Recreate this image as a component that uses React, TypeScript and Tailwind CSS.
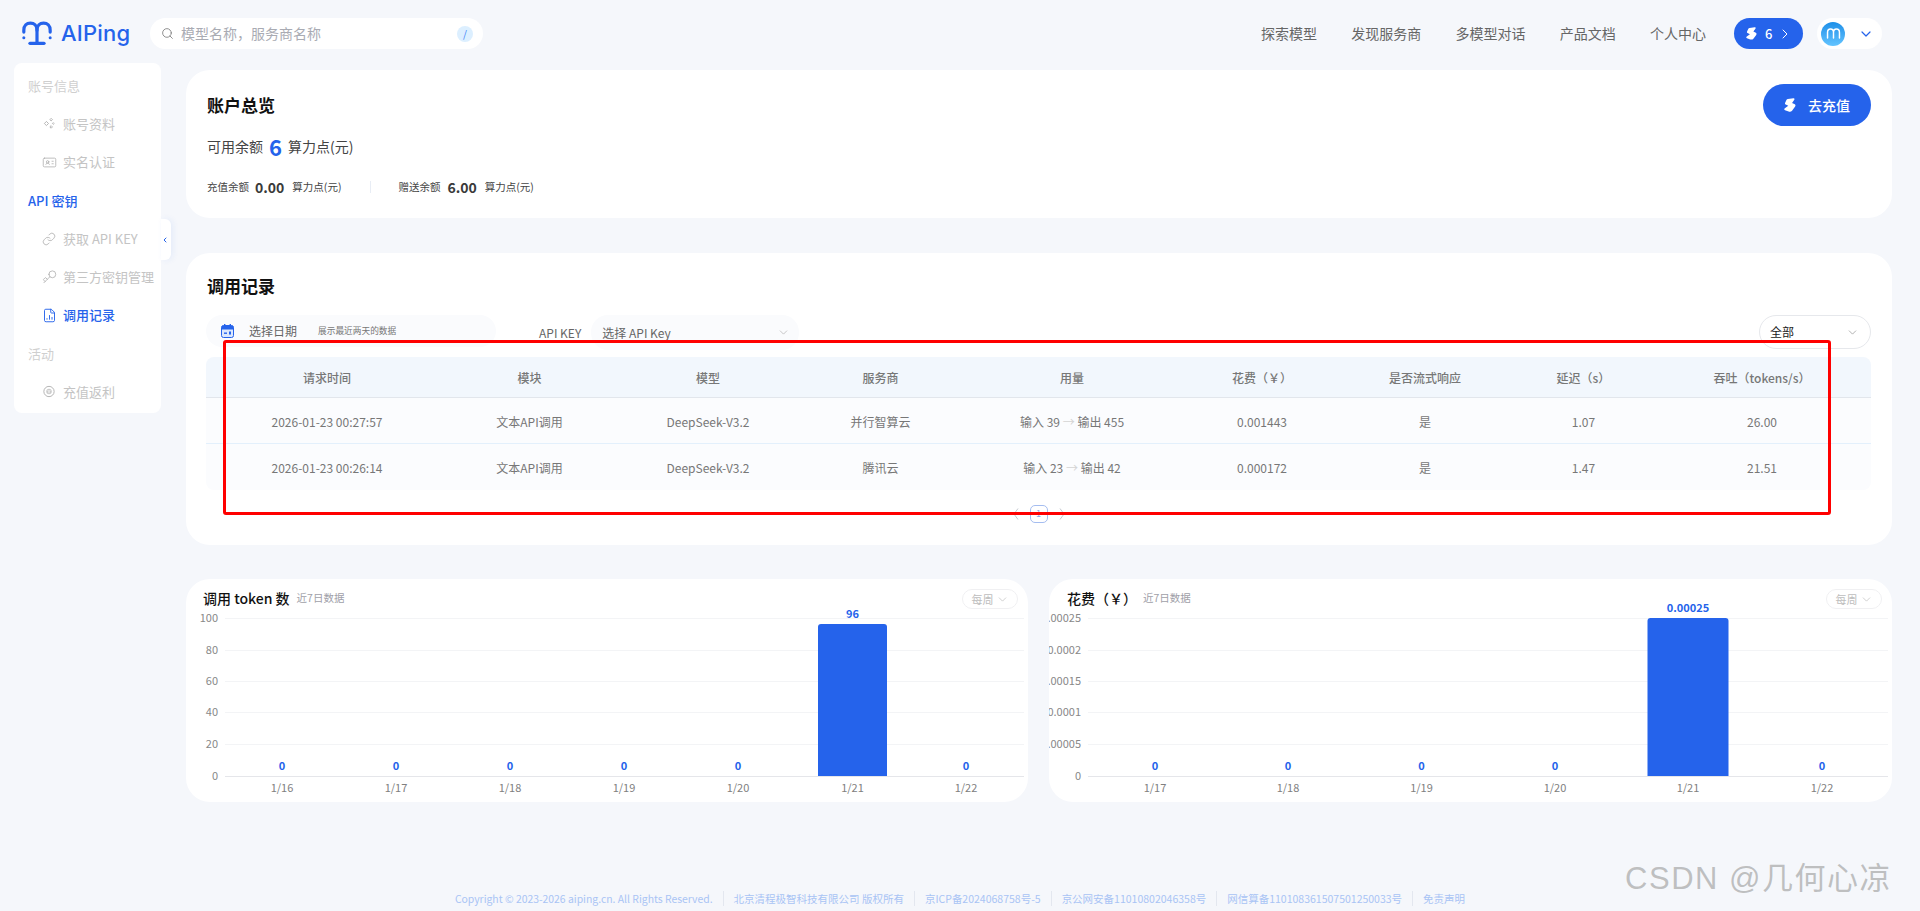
import React from "react";
import { Search, ChevronRight, ChevronDown, ChevronLeft, IdCard, Link, Key, FileChartColumn } from "lucide-react";

const BoltS = ({ className }: { className?: string }) => (
  <svg viewBox="0 0 14 16" className={className} fill="currentColor">
    <path d="M4.5 1 L11 0.2 C12.2 0 12.6 1 12 2 L9.4 5.6 L12.6 7.2 C13.6 7.8 13.6 8.8 13 9.8 L9.4 14.6 C8.4 15.9 6.6 16 5.4 15.5 L1.2 14 C0 13.5 0 12.5 1 11.8 L5 8.8 L2 7.4 C1 6.9 1 6 1.5 5 L3 2 C3.4 1.3 3.8 1.1 4.5 1 Z" />
  </svg>
);

const Logo = () => (
  <svg viewBox="0 0 34 26" className="w-[32px] h-[26px]" fill="none" stroke="#2563eb" strokeWidth="3.4" strokeLinecap="round">
    <path d="M3 12 V10 C3 5 6 2.5 10 2.5 C14 2.5 17 5 17 10 V23" />
    <path d="M31 12 V10 C31 5 28 2.5 24 2.5 C20 2.5 17 5 17 10" />
    <path d="M9.5 24 H24.5" />
    <circle cx="3" cy="18" r="1.6" fill="#2563eb" stroke="none" />
    <circle cx="31" cy="18" r="1.6" fill="#2563eb" stroke="none" />
  </svg>
);

const Diamonds = () => (
  <svg viewBox="0 0 14 14" className="w-[13px] h-[13px]" fill="none" stroke="#aaaaaa" strokeWidth="1">
    <path d="M4 4.6 L6.4 7 L4 9.4 L1.6 7 Z" />
    <path d="M9.5 1 L11 2.5 L9.5 4 L8 2.5 Z" />
    <path d="M9.5 9.5 L11 11 L9.5 12.5 L8 11 Z" />
    <path d="M12 6 L13 7 L12 8 L11 7 Z" />
  </svg>
);

const YenCircle = () => (
  <svg viewBox="0 0 14 14" className="w-[13px] h-[13px]" fill="none" stroke="#aaaaaa" strokeWidth="1">
    <circle cx="7" cy="7" r="6" />
    <circle cx="7" cy="7" r="3.2" fill="#cccccc" stroke="none" />
    <path d="M5.6 5.4 L7 7 L8.4 5.4 M7 7 V9" stroke="#ffffff" />
  </svg>
);

const CalendarMark = () => (
  <svg viewBox="0 0 13 14" className="w-[13px] h-[14px]">
    <rect x="0.5" y="1.5" width="12" height="12" rx="2" fill="#dbe8fd" stroke="#2563eb" />
    <path d="M0.5 3.5 a2 2 0 0 1 2 -2 h8 a2 2 0 0 1 2 2 V5.5 H0.5 Z" fill="#2563eb" />
    <rect x="3" y="0" width="1.4" height="3" fill="#2563eb" />
    <rect x="8.6" y="0" width="1.4" height="3" fill="#2563eb" />
    <rect x="3" y="8.5" width="3" height="1.4" fill="#2563eb" />
    <rect x="8" y="7.5" width="2" height="3" fill="#2563eb" />
  </svg>
);

const PageArrow = ({ flip }: { flip?: boolean }) => (
  <svg viewBox="0 0 6 12" className={`w-[6px] h-[12px] ${flip ? "-scale-x-100" : ""}`} fill="none" stroke="#c4c8d0" strokeWidth="1">
    <path d="M5 0.5 L1 6 L5 11.5" />
  </svg>
);

const SideLabel = ({ children, active }: { children: React.ReactNode; active?: boolean }) => (
  <div className={`h-[38.25px] pl-[14px] flex items-center text-[13px] ${active ? "text-[#2563eb] font-medium" : "text-[#cfcfcf]"}`}>{children}</div>
);

const SideItem = ({ icon, label, active }: { icon: React.ReactNode; label: string; active?: boolean }) => (
  <div className={`h-[38.25px] pl-[29px] flex items-center gap-[8px] text-[13px] ${active ? "text-[#2563eb] font-medium" : "text-[#c4c4c4]"}`}>
    <span className="w-[12px] h-[14px] flex items-center justify-center">{icon}</span>
    <span>{label}</span>
  </div>
);

const Sidebar = () => (
  <aside className="relative w-[147px] h-[350px] ml-[14px] pt-[3.5px] bg-white rounded-[8px] shrink-0">
    <SideLabel>账号信息</SideLabel>
    <SideItem icon={<Diamonds />} label="账号资料" />
    <SideItem icon={<IdCard className="w-[15px] h-[15px] shrink-0 text-[#aaaaaa]" strokeWidth={1.2} />} label="实名认证" />
    <SideLabel active>API 密钥</SideLabel>
    <SideItem icon={<Link className="w-[14px] h-[14px] shrink-0 text-[#aaaaaa]" strokeWidth={1.3} />} label="获取 API KEY" />
    <SideItem icon={<Key className="w-[15px] h-[15px] shrink-0 text-[#aaaaaa] rotate-180" strokeWidth={1.2} />} label="第三方密钥管理" />
    <SideItem icon={<FileChartColumn className="w-[15px] h-[15px] shrink-0 text-[#2563eb]" strokeWidth={1.5} />} label="调用记录" active />
    <SideLabel>活动</SideLabel>
    <SideItem icon={<YenCircle />} label="充值返利" />
    <div className="absolute left-[147px] top-[156px] w-[10px] h-[41px] bg-white rounded-r-[6px] shadow-[2px_0_6px_rgba(37,99,235,0.08)] flex items-center justify-start">
      <ChevronLeft className="w-[8px] h-[10px] text-[#2563eb]" strokeWidth={3} />
    </div>
  </aside>
);

const Header = () => (
  <header className="h-[63px] flex items-start shrink-0">
    <div className="ml-[21px] mt-[20px] w-[129px] flex items-center gap-[8px]">
      <Logo />
      <span className="font-['Inter',sans-serif] text-[22px] leading-[26px] font-medium tracking-[0.2px] text-[#2563eb]">AIPing</span>
    </div>
    <div className="mt-[18px] w-[333px] h-[31px] bg-white rounded-full flex items-center pl-[11px] pr-[10px]">
      <Search className="w-[13px] h-[13px] text-[#777777]" strokeWidth={1.5} />
      <span className="ml-[7px] text-[14px] text-[#a9abb3] flex-1">模型名称，服务商名称</span>
      <span className="w-[16px] h-[16px] rounded-full bg-[#dcefff] text-[#3b82f6] text-[10px] flex items-center justify-center">/</span>
    </div>
    <nav className="ml-auto mt-[18px] mr-[38px] flex items-center h-[31px]">
      <div className="flex items-center gap-[34.25px] text-[14px] text-[#666666]">
        <span>探索模型</span>
        <span>发现服务商</span>
        <span>多模型对话</span>
        <span>产品文档</span>
        <span>个人中心</span>
      </div>
      <div className="ml-[28px] w-[69px] h-[31px] rounded-full bg-[#2563eb] text-white flex items-center pl-[12px]">
        <BoltS className="w-[11px] h-[13px]" />
        <span className="ml-[8px] text-[13px] font-medium">6</span>
        <ChevronRight className="ml-[5px] w-[16px] h-[16px]" strokeWidth={1.5} />
      </div>
      <div className="ml-[14px] w-[65px] h-[31px] rounded-full bg-white flex items-center pl-[4px]">
        <div className="w-[24px] h-[24px] rounded-full bg-gradient-to-b from-[#1a8fe8] to-[#62c4ff] flex items-center justify-center">
          <svg viewBox="0 0 16 12" className="w-[15px] h-[11px]" fill="none" stroke="#ffffff" strokeWidth="1.6" strokeLinecap="round">
            <path d="M1.5 11 V5 C1.5 2.5 3 1.2 4.8 1.2 C6.6 1.2 8 2.5 8 5 V11 M8 5 C8 2.5 9.4 1.2 11.2 1.2 C13 1.2 14.5 2.5 14.5 5 V11" />
          </svg>
        </div>
        <ChevronDown className="ml-[13px] w-[16px] h-[16px] text-[#2563eb]" strokeWidth={1.8} />
      </div>
    </nav>
  </header>
);

const Overview = () => (
  <section className="relative h-[148px] bg-white rounded-[24px] pl-[21px] pt-[24px]">
    <h2 className="text-[17px] leading-[22px] font-semibold text-[#111111]">账户总览</h2>
    <div className="mt-[16px] h-[28px] flex items-center text-[14px] text-[#444444]">
      <span>可用余额</span>
      <span className="ml-[6px] text-[22px] leading-[28px] font-semibold text-[#2563eb]">6</span>
      <span className="ml-[6px]">算力点(元)</span>
    </div>
    <div className="mt-[16px] h-[22px] flex items-center text-[10.5px] text-[#444444]">
      <span>充值余额</span>
      <span className="ml-[6px] text-[14px] font-semibold text-[#3a3a3a]">0.00</span>
      <span className="ml-[8px]">算力点(元)</span>
      <span className="ml-[29px] mr-[27px] w-px h-[12px] bg-[#e8edf5]" />
      <span>赠送余额</span>
      <span className="ml-[7px] text-[14px] font-semibold text-[#3a3a3a]">6.00</span>
      <span className="ml-[8px]">算力点(元)</span>
    </div>
    <button className="absolute right-[21px] top-[14px] w-[108px] h-[42px] rounded-full bg-[#2563eb] text-white flex items-center justify-center gap-[12px] text-[14px] font-medium">
      <BoltS className="w-[12px] h-[14px]" />
      <span>去充值</span>
    </button>
  </section>
);

const cols = "grid grid-cols-[242px_163px_194px_151px_232px_142px_190px_127px_224px]";
const head = ["请求时间", "模块", "模型", "服务商", "用量", "花费（￥）", "是否流式响应", "延迟（s）", "吞吐（tokens/s）"];
const rows = [
  ["2026-01-23 00:27:57", "文本API调用", "DeepSeek-V3.2", "并行智算云", ["输入 39", "输出 455"], "0.001443", "是", "1.07", "26.00"],
  ["2026-01-23 00:26:14", "文本API调用", "DeepSeek-V3.2", "腾讯云", ["输入 23", "输出 42"], "0.000172", "是", "1.47", "21.51"],
];
const cellShift = (j: number) => (j === 5 || j === 8 ? "pl-[6px]" : "");

const Records = () => (
  <section className="mt-[35px] h-[292px] bg-white rounded-[24px] pl-[20px] pr-[21px] pt-[21px]">
    <h2 className="text-[17px] leading-[24px] font-semibold text-[#111111] pl-px">调用记录</h2>
    <div className="mt-[17px] h-[42px] flex items-start text-[12px] text-[#666666]">
      <div className="w-[290px] h-[32px] rounded-[16px] bg-[#fafbfd] flex items-center pl-[15px]">
        <CalendarMark />
        <span className="ml-[15px]">选择日期</span>
        <span className="ml-[21px] text-[8.7px] text-[#777777]">展示最近两天的数据</span>
      </div>
      <span className="ml-[43px] h-[35px] leading-[36px]">API KEY</span>
      <div className="ml-[10px] w-[208px] h-[35px] rounded-[17px] bg-[#fafbfd] flex items-center pl-[11px] pr-[9px] justify-between">
        <span>选择 API Key</span>
        <ChevronDown className="w-[13px] h-[13px] text-[#aaaaaa]" strokeWidth={1.2} />
      </div>
      <div className="ml-auto w-[112px] h-[34px] rounded-[17px] border border-[#e6e8ec] flex items-center pl-[10px] pr-[11px] justify-between text-[#222222]">
        <span>全部</span>
        <ChevronDown className="w-[13px] h-[13px] text-[#888888]" strokeWidth={1.2} />
      </div>
    </div>
    <div className={`${cols} h-[41px] items-center text-center text-[12px] font-medium text-[#777777] bg-[#f2f7fd] border-b border-[#e2e6ec] rounded-t-[8px]`}>
      {head.map((h, j) => (
        <span key={h} className={`pt-[2px] ${cellShift(j)}`}>{h}</span>
      ))}
    </div>
    {rows.map((r, i) => (
      <div key={i} className={`${cols} h-[46px] items-center text-center text-[12px] text-[#777777] bg-[#fbfcfe] ${i === 0 ? "border-b border-[#e3f0fc]" : "rounded-b-[8px]"}`}>
        {r.map((c, j) =>
          Array.isArray(c) ? (
            <span key={j} className="pt-[2px]">
              {c[0]} <span className="text-[#d4d4d4]">→</span> {c[1]}
            </span>
          ) : (
            <span key={j} className={`pt-[2px] ${cellShift(j)}`}>{c}</span>
          )
        )}
      </div>
    ))}
    <div className="mt-[15px] h-[18px] flex items-center justify-center gap-[11px]">
      <PageArrow />
      <span className="w-[18px] h-[18px] rounded-[5px] border border-[#a5bdf0] text-[9px] text-[#8aa6e6] flex items-center justify-center">1</span>
      <PageArrow flip />
    </div>
  </section>
);

type Cat = { x: number; label: string; value: string; top: number };
type ChartProps = {
  title: string;
  titleClass: string;
  subClass: string;
  yLabels: string[];
  cats: Cat[];
  barW: number;
  x0: number;
  width: number;
  className: string;
};

const gridY = [4, 36, 67, 98, 130, 162];

const Chart = ({ title, titleClass, subClass, yLabels, cats, barW, x0, width, className }: ChartProps) => (
  <div className={`relative h-[223px] bg-white rounded-[24px] overflow-hidden ${className}`}>
    <div className="h-[35px] pt-[3px] relative flex items-center">
      <span className={`text-[14px] font-medium text-[#111111] ${titleClass}`}>{title}</span>
      <span className={`text-[10.5px] text-[#a0a0a8] ${subClass}`}>近7日数据</span>
      <span className="absolute right-[10px] top-[10px] w-[56px] h-[20px] rounded-full border border-[#f0f0f2] text-[11px] text-[#bdbdbd] flex items-center justify-center gap-[2px]">
        每周
        <ChevronDown className="w-[13px] h-[13px]" strokeWidth={1.3} />
      </span>
    </div>
    <svg width={width} height={188} className="block overflow-visible font-['Noto_Sans_CJK_SC',sans-serif]">
      {gridY.map((y, i) => (
        <line key={y} x1={x0} x2={width - 4} y1={y + 0.5} y2={y + 0.5} stroke={i === 5 ? "#e5e6ea" : "#f3f4f6"} />
      ))}
      {yLabels.map((t, i) => (
        <text key={t} x={x0 - 7} y={gridY[i] + 4} textAnchor="end" fontSize="11" fill="#888888">
          {t}
        </text>
      ))}
      {cats.map((c) => (
        <g key={c.label}>
          {c.top < 162 && (
            <path
              d={`M${c.x - barW / 2} 162 V${c.top + 3} a3 3 0 0 1 3 -3 H${c.x + barW / 2 - 3} a3 3 0 0 1 3 3 V162 Z`}
              fill="#2563eb"
            />
          )}
          <text x={c.x} y={c.top - 6} textAnchor="middle" fontSize="11" fontWeight="700" fill="#2563eb">
            {c.value}
          </text>
          <text x={c.x} y={178} textAnchor="middle" fontSize="11" fill="#808080">
            {c.label}
          </text>
        </g>
      ))}
    </svg>
  </div>
);

const cats1: Cat[] = [
  { x: 96, label: "1/16", value: "0", top: 162 },
  { x: 210, label: "1/17", value: "0", top: 162 },
  { x: 324, label: "1/18", value: "0", top: 162 },
  { x: 438, label: "1/19", value: "0", top: 162 },
  { x: 552, label: "1/20", value: "0", top: 162 },
  { x: 666.5, label: "1/21", value: "96", top: 10 },
  { x: 780, label: "1/22", value: "0", top: 162 },
];

const cats2: Cat[] = [
  { x: 106, label: "1/17", value: "0", top: 162 },
  { x: 239, label: "1/18", value: "0", top: 162 },
  { x: 372.5, label: "1/19", value: "0", top: 162 },
  { x: 506, label: "1/20", value: "0", top: 162 },
  { x: 639, label: "1/21", value: "0.00025", top: 4 },
  { x: 773, label: "1/22", value: "0", top: 162 },
];

const Charts = () => (
  <div className="mt-[34px] flex gap-[21px]">
    <Chart
      className="w-[842px]"
      title="调用 token 数"
      titleClass="ml-[17px]"
      subClass="ml-[7px]"
      yLabels={["100", "80", "60", "40", "20", "0"]}
      x0={39}
      width={842}
      barW={69}
      cats={cats1}
    />
    <Chart
      className="w-[843px]"
      title="花费（￥）"
      titleClass="ml-[18px]"
      subClass="ml-[6px]"
      yLabels={["0.00025", "0.0002", "0.00015", "0.0001", "0.00005", "0"]}
      x0={39}
      width={843}
      barW={81}
      cats={cats2}
    />
  </div>
);

const Footer = () => {
  const items = [
    "Copyright © 2023-2026 aiping.cn. All Rights Reserved.",
    "北京清程极智科技有限公司 版权所有",
    "京ICP备2024068758号-5",
    "京公网安备11010802046358号",
    "网信算备110108361507501250033号",
    "免责声明",
  ];
  return (
    <footer className="mt-[86px] h-[21px] flex items-center justify-center text-[10.5px] text-[#a9c4f5]">
      {items.map((t, i) => (
        <span key={t} className={i === 0 ? "pr-[10px] text-[10.4px]" : "pl-[10px] pr-[10px] border-l border-[#e3e7ef] last:pr-0"}>
          {t}
        </span>
      ))}
    </footer>
  );
};

export default function App() {
  return (
    <div className="relative h-[911px] overflow-hidden bg-[#f5f7fb] flex flex-col font-['Noto_Sans_CJK_SC','Noto_Sans',sans-serif]">
      <Header />
      <div className="flex items-start h-[739px]">
        <Sidebar />
        <main className="ml-[25px] w-[1706px] pt-[7px]">
          <Overview />
          <Records />
          <Charts />
        </main>
      </div>
      <Footer />
      <div className="absolute left-[223px] top-[340px] w-[1608px] h-[175px] border-[3px] border-[#ff0000] rounded-[3px] pointer-events-none" />
      <div className="absolute right-[28px] top-[859px] text-[31px] leading-[40px] tracking-[1.5px] text-[#999999]/60 font-['Liberation_Sans','Noto_Sans_CJK_SC',sans-serif]">CSDN @几何心凉</div>
    </div>
  );
}
